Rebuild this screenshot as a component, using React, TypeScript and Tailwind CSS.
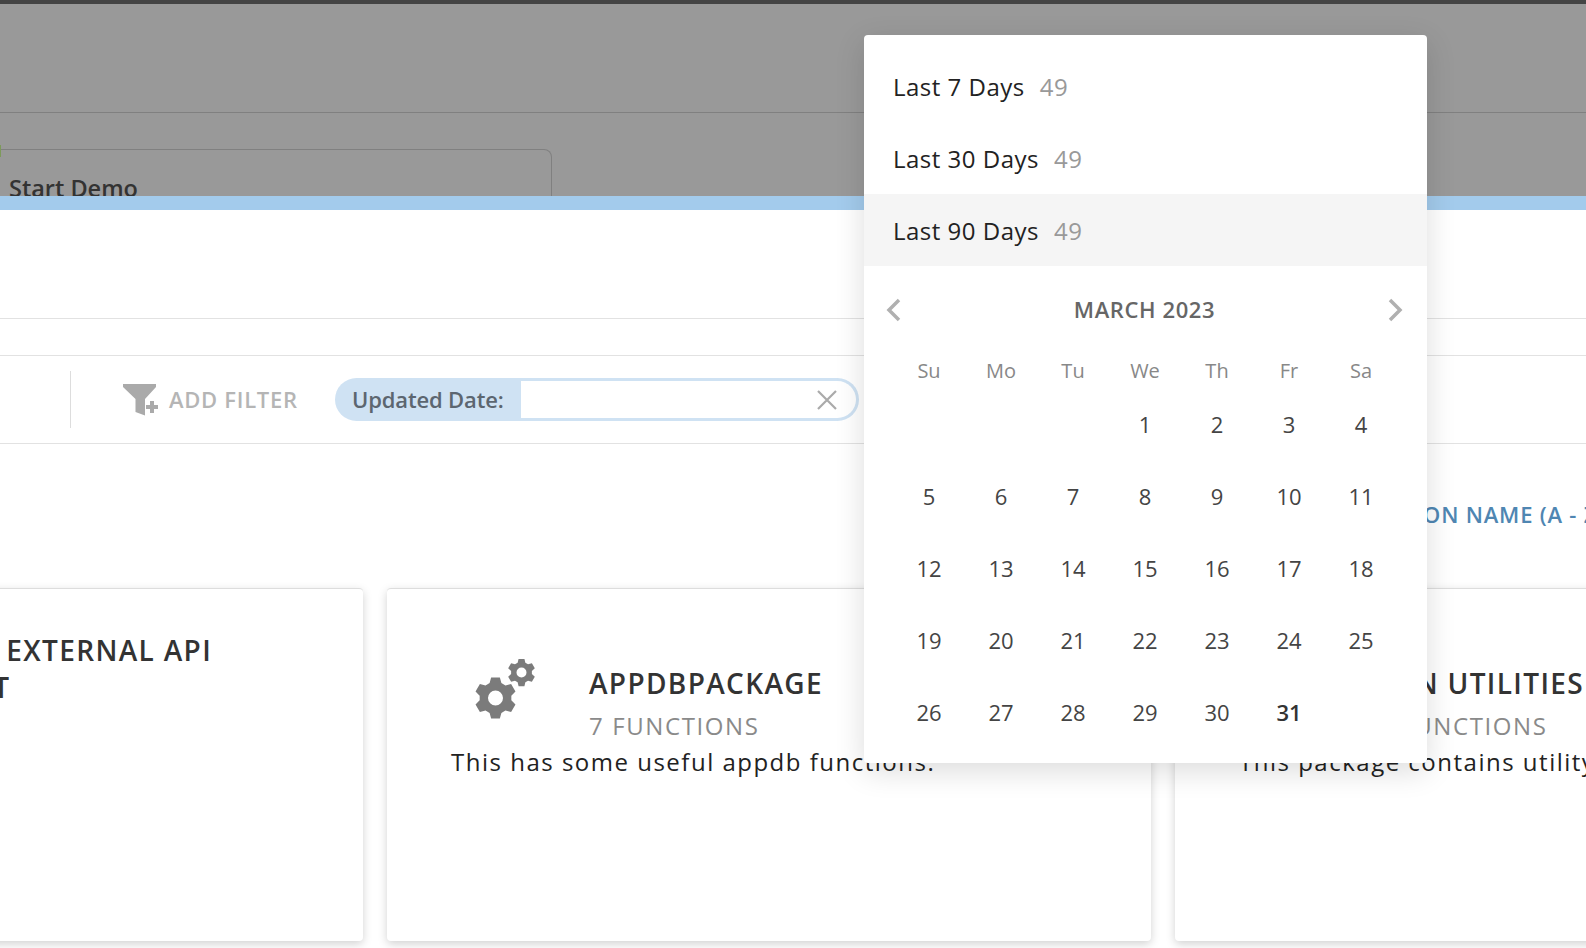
const gearPath = (cx: number, cy: number, outer: number, inner: number, hole: number) => {
  const pts: string[] = [];
  for (let i = 0; i < 6; i++) {
    const a = (i * Math.PI) / 3 - Math.PI / 2;
    const step = Math.PI / 3;
    const corners: [number, number][] = [
      [a - step * 0.36, inner],
      [a - step * 0.2, outer],
      [a + step * 0.2, outer],
      [a + step * 0.36, inner],
    ];
    corners.forEach(([t, r]) => pts.push(`${(cx + r * Math.cos(t)).toFixed(2)} ${(cy + r * Math.sin(t)).toFixed(2)}`));
  }
  const circle = `M${cx - hole} ${cy}a${hole} ${hole} 0 1 0 ${hole * 2} 0a${hole} ${hole} 0 1 0 ${-hole * 2} 0Z`;
  return `M${pts.join("L")}Z${circle}`;
};

const GearsIcon = () => (
  <svg width="60" height="60" viewBox="0 0 60 60" className="shrink-0 mb-[28px] text-[#7b7b7b]" fill="currentColor">
    <path fillRule="evenodd" d={gearPath(20.5, 39, 21, 16, 7.5)} />
    <path fillRule="evenodd" d={gearPath(46.5, 13.5, 14, 10.5, 5)} />
  </svg>
);

const FilterPlusIcon = () => (
  <svg width="35" height="32" viewBox="0 0 35 32" fill="#aaa" className="shrink-0">
    <path d="M0 0H33V3L22 15V31.5L12.5 28V15L0 3Z" />
    <path d="M27 17H31V21H35V25H31V29H27V25H23V21H27Z" stroke="#fff" strokeWidth="1.5" paintOrder="stroke" />
  </svg>
);

interface CardProps {
  title: React.ReactNode;
  sub: string;
  desc: string;
  lift?: boolean;
}

const Card = ({ title, sub, desc, lift }: CardProps) => (
  <div className="w-[764px] h-[353px] shrink-0 bg-white rounded-[4px] border-t border-[#ddd] shadow-[0_3px_10px_rgba(0,0,0,0.18)] pl-16 pt-[70px]">
    <div className="flex items-center gap-[54px] pl-6 h-[88px]">
      <GearsIcon />
      <div className={lift ? "pb-[28px]" : ""}>
        <div className="pt-[1px] text-[28px] leading-[37px] font-semibold tracking-[1.35px] text-[#333] whitespace-nowrap">{title}</div>
        <div className="text-[24px] leading-[34px] mt-[7px] tracking-[1.6px] text-[#8a8a8a]">{sub}</div>
      </div>
    </div>
    <p className="-mt-[2px] text-[24px] leading-[34px] tracking-[1.5px] text-[#222] whitespace-nowrap">{desc}</p>
  </div>
);

const ranges = ["Last 7 Days", "Last 30 Days", "Last 90 Days"];
const weekdays = ["Su", "Mo", "Tu", "We", "Th", "Fr", "Sa"];
const days: (number | null)[] = [null, null, null, ...Array.from({ length: 31 }, (_, i) => i + 1)];

const DatePopup = () => (
  <div className="absolute left-[864px] top-[35px] w-[563px] h-[728px] bg-white rounded-[4px] shadow-[0_8px_30px_rgba(0,0,0,0.14)] pt-[15px]">
    {ranges.map((label, i) => (
      <div key={label} className={`h-[72px] flex items-center pl-[29px] gap-[15px] text-[24px] tracking-[0.5px] ${i === 2 ? "bg-[#f5f5f5]" : ""}`}>
        <span className="text-[#222] pt-[2px]">{label}</span>
        <span className="text-[#999] pt-[2px]">49</span>
      </div>
    ))}
    <div className="flex items-center justify-between h-[87px] pl-[20px] pr-[22px] text-[#b0b0b0]">
      <svg width="18" height="24" viewBox="0 0 18 24" fill="none" stroke="currentColor" strokeWidth="3.5"><path d="M15 2L5 12L15 22" /></svg>
      <span className="text-[22px] font-semibold tracking-[0.6px] text-[#666]">MARCH 2023</span>
      <svg width="18" height="24" viewBox="0 0 18 24" fill="none" stroke="currentColor" strokeWidth="3.5"><path d="M3 2L13 12L3 22" /></svg>
    </div>
    <div className="grid grid-cols-[repeat(7,72px)] pl-[29px] pt-[2px]">
      {weekdays.map((d) => (
        <div key={d} className="h-[32px] flex items-center justify-center text-[20px] text-[#888]">{d}</div>
      ))}
    </div>
    <div className="grid grid-cols-[repeat(7,72px)] auto-rows-[72px] pl-[29px] pt-[1px]">
      {days.map((d, i) => (
        <div key={i} className={`flex items-center justify-center text-[22px] ${d === 31 ? "font-semibold text-[#333]" : "text-[#444]"}`}>{d}</div>
      ))}
    </div>
  </div>
);

export default function App() {
  return (
    <div className="relative w-[1586px] h-[948px] overflow-hidden bg-white font-['Open_Sans',sans-serif]">
      <div className="h-1 bg-[#444]" />
      <div className="h-[192px] bg-[#999] overflow-hidden">
        <div className="h-[109px] border-b border-[#808080]" />
        <div className="relative pt-9">
          <span className="absolute left-0 top-8 w-px h-3 bg-[#7d9a5a]" />
          <div className="w-[552px] h-[60px] border border-l-0 border-[#808080] rounded-tr-[8px] pl-[9px] pt-[22px] text-[23.5px] leading-[32px] font-semibold text-[#333]">
            Start Demo
          </div>
        </div>
      </div>
      <div className="h-[14px] bg-[#a3cbec]" />
      <div className="h-[109px] border-b border-[#e2e2e2]" />
      <div className="h-[37px] border-b border-[#e2e2e2]" />
      <div className="h-[88px] border-b border-[#e2e2e2] flex items-center">
        <div className="w-[71px] h-[57px] border-r border-[#ddd]" />
        <div className="flex items-center gap-[11px] ml-[52px]">
          <FilterPlusIcon />
          <span className="w-[130px] text-[22px] font-semibold tracking-[0.7px] text-[#b5b5b5] whitespace-nowrap">ADD FILTER</span>
        </div>
        <div className="flex items-stretch ml-[36px] w-[524px] h-[43px] rounded-full bg-[#cfe2f3] p-[3px]">
          <span className="w-[183px] pl-[14px] flex items-center text-[22px] font-semibold tracking-[-0.15px] text-[#5c6670]">Updated Date:</span>
          <div className="flex-1 flex items-center justify-end pr-[19px] bg-white rounded-r-full">
            <svg width="20" height="20" viewBox="0 0 20 20" stroke="#aaa" strokeWidth="2.2"><path d="M1 1L19 19M19 1L1 19" /></svg>
          </div>
        </div>
      </div>
      <div className="h-[144px] flex justify-end pt-[52px] -mr-[19px]">
        <span className="text-[22px] leading-[36px] font-semibold tracking-[0.8px] text-[#4f86b2] whitespace-nowrap">
          SORT BY: APPLICATION NAME (A - Z)
        </span>
      </div>
      <div className="flex gap-6 -ml-[401px]">
        <Card lift title={<>CALLING ANY EXTERNAL API<br /><span className="tracking-[1.7px]">WEB REQUEST</span></>} sub="4 FUNCTIONS" desc="Calls an external API." />
        <Card title="APPDBPACKAGE" sub="7 FUNCTIONS" desc="This has some useful appdb functions." />
        <Card title="GEN UTILITIES" sub="7 FUNCTIONS" desc="This package contains utility functions." />
      </div>
      <DatePopup />
    </div>
  );
}
